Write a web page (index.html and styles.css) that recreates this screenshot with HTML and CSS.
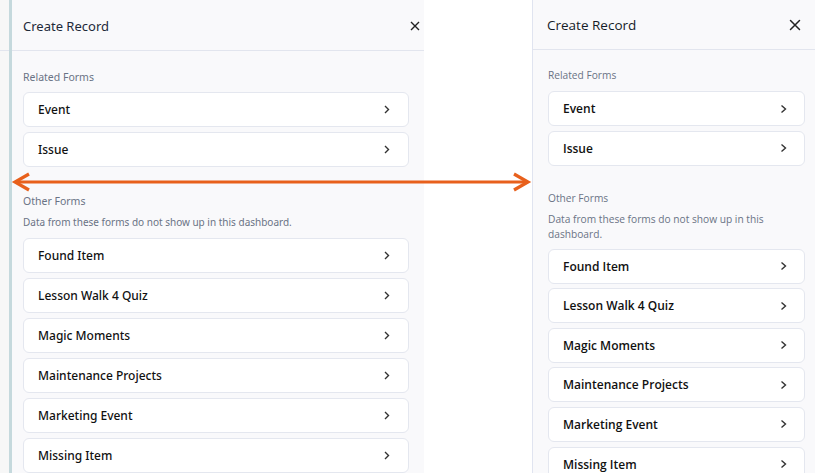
FILE: index.html
```html
<!DOCTYPE html>
<html lang="en">

<head>
    <meta charset="UTF-8">
    <meta name="viewport" content="width=device-width, initial-scale=1.0">
    <title>Create Record - before and after</title>
    <link rel="stylesheet" href="styles.css">
</head>

<body>
    <div class="compare">
        <div class="stub"><div class="stub-head"></div></div>

        <!-- Old panel -->
        <div class="panel panel-old">
            <div class="panel-header">
                <span class="panel-title">Create Record</span>
                <span class="close">
                    <svg width="10" height="10" viewBox="0 0 10 10"><path d="M1 1l8 8M9 1l-8 8" stroke="#222" stroke-width="1.4" fill="none"/></svg>
                </span>
            </div>
            <div class="panel-body">
                <div class="section-label">Related Forms</div>
                <div class="form-list">
                    <div class="form-item"><span>Event</span><svg class="chev" width="6" height="9" viewBox="0 0 6 9"><path d="M1 1l3.5 3.5L1 8" /></svg></div>
                    <div class="form-item"><span>Issue</span><svg class="chev" width="6" height="9" viewBox="0 0 6 9"><path d="M1 1l3.5 3.5L1 8" /></svg></div>
                </div>
                <div class="section-label section-gap">Other Forms</div>
                <div class="section-note">Data from these forms do not show up in this dashboard.</div>
                <div class="form-list">
                    <div class="form-item"><span>Found Item</span><svg class="chev" width="6" height="9" viewBox="0 0 6 9"><path d="M1 1l3.5 3.5L1 8" /></svg></div>
                    <div class="form-item"><span>Lesson Walk 4 Quiz</span><svg class="chev" width="6" height="9" viewBox="0 0 6 9"><path d="M1 1l3.5 3.5L1 8" /></svg></div>
                    <div class="form-item"><span>Magic Moments</span><svg class="chev" width="6" height="9" viewBox="0 0 6 9"><path d="M1 1l3.5 3.5L1 8" /></svg></div>
                    <div class="form-item"><span>Maintenance Projects</span><svg class="chev" width="6" height="9" viewBox="0 0 6 9"><path d="M1 1l3.5 3.5L1 8" /></svg></div>
                    <div class="form-item"><span>Marketing Event</span><svg class="chev" width="6" height="9" viewBox="0 0 6 9"><path d="M1 1l3.5 3.5L1 8" /></svg></div>
                    <div class="form-item"><span>Missing Item</span><svg class="chev" width="6" height="9" viewBox="0 0 6 9"><path d="M1 1l3.5 3.5L1 8" /></svg></div>
                </div>
            </div>
        </div>

        <div class="spacer"></div>

        <!-- New panel -->
        <div class="panel panel-new">
            <div class="panel-header">
                <span class="panel-title">Create Record</span>
                <span class="close">
                    <svg width="12" height="12" viewBox="0 0 12 12"><path d="M1.5 1.5l9 9M10.5 1.5l-9 9" stroke="#222" stroke-width="1.5" fill="none" stroke-linecap="round"/></svg>
                </span>
            </div>
            <div class="panel-body">
                <div class="section-label">Related Forms</div>
                <div class="form-list">
                    <div class="form-item"><span>Event</span><svg class="chev" width="7" height="10" viewBox="0 0 7 10"><path d="M1.5 1.5l4 3.5-4 3.5" /></svg></div>
                    <div class="form-item"><span>Issue</span><svg class="chev" width="7" height="10" viewBox="0 0 7 10"><path d="M1.5 1.5l4 3.5-4 3.5" /></svg></div>
                </div>
                <div class="section-label section-gap">Other Forms</div>
                <div class="section-note">Data from these forms do not show up in this dashboard.</div>
                <div class="form-list">
                    <div class="form-item"><span>Found Item</span><svg class="chev" width="7" height="10" viewBox="0 0 7 10"><path d="M1.5 1.5l4 3.5-4 3.5" /></svg></div>
                    <div class="form-item"><span>Lesson Walk 4 Quiz</span><svg class="chev" width="7" height="10" viewBox="0 0 7 10"><path d="M1.5 1.5l4 3.5-4 3.5" /></svg></div>
                    <div class="form-item"><span>Magic Moments</span><svg class="chev" width="7" height="10" viewBox="0 0 7 10"><path d="M1.5 1.5l4 3.5-4 3.5" /></svg></div>
                    <div class="form-item"><span>Maintenance Projects</span><svg class="chev" width="7" height="10" viewBox="0 0 7 10"><path d="M1.5 1.5l4 3.5-4 3.5" /></svg></div>
                    <div class="form-item"><span>Marketing Event</span><svg class="chev" width="7" height="10" viewBox="0 0 7 10"><path d="M1.5 1.5l4 3.5-4 3.5" /></svg></div>
                    <div class="form-item"><span>Missing Item</span><svg class="chev" width="7" height="10" viewBox="0 0 7 10"><path d="M1.5 1.5l4 3.5-4 3.5" /></svg></div>
                </div>
            </div>
        </div>

        <!-- arrow drawn over both panels -->
        <svg class="width-arrow" width="534" height="26" viewBox="0 0 534 26">
            <path d="M15 13H528" stroke="#e8601c" stroke-width="3" fill="none"/>
            <path d="M29 5L15 13L29 21" stroke="#e8601c" stroke-width="3.2" fill="none"/>
            <path d="M514 5L528 13L514 21" stroke="#e8601c" stroke-width="3.2" fill="none"/>
        </svg>
    </div>
</body>

</html>
```

FILE: styles.css
```css
body {
    margin: 0;
    padding: 0;
    background-color: #fff;
    font-family: "Open Sans", Arial, sans-serif;
    color: #111;
}

.compare {
    position: relative;
    display: flex;
    height: 473px;
    overflow: hidden;
}

.stub {
    width: 9px;
    background-color: #f7f7f7;
}

.stub-head {
    height: 50px;
    border-bottom: 1px solid #e2e5ee;
}

.panel {
    background-color: #f9f9fb;
}

/* old version */
.panel-old {
    width: 412px;
    border-left: 3px solid #c5d9dd;
    font-family: "Noto Sans", Tahoma, sans-serif;
}

.spacer {
    width: 108px;
}

/* new version */
.panel-new {
    flex: 1;
    border-left: 1px solid #e0e4f0;
}

.panel-header {
    display: flex;
    align-items: center;
    justify-content: space-between;
    height: 50px;
    border-bottom: 1px solid #e2e5ee;
}

.panel-old .panel-header {
    padding: 2px 4px 0 11px;
    height: 48px;
}

.panel-new .panel-header {
    height: 49px;
    padding: 0 14px 0 14px;
}

.panel-title {
    font-size: 13px;
    color: #1e2a3a;
}

.panel-new .panel-title {
    font-size: 13.5px;
    color: #151c28;
}

.close {
    display: flex;
}

.panel-body {
    padding: 19px 15px 0 11px;
}

.panel-new .panel-body {
    padding: 18px 10px 0 15px;
}

.section-label {
    font-size: 10.5px;
    line-height: 14px;
    color: #6a7385;
    margin-bottom: 8px;
}

.panel-new .section-label {
    font-size: 10.2px;
    margin-bottom: 9px;
}

.section-gap {
    margin-top: 27px;
}

.panel-new .section-gap {
    margin-top: 25px;
    margin-bottom: 7px;
}

.panel-old .section-gap {
    margin-bottom: 7px;
}

.section-note {
    font-size: 10px;
    line-height: 14px;
    color: #6a7385;
    margin-bottom: 9px;
}

.panel-new .section-note {
    font-size: 10.2px;
    line-height: 15px;
    margin-bottom: 7px;
}

.form-list {
    display: flex;
    flex-direction: column;
    gap: 5px;
}

.panel-new .form-list {
    gap: 4.6px;
}

.form-item {
    display: flex;
    align-items: center;
    justify-content: space-between;
    height: 33px;
    padding: 0 18px 0 14px;
    background-color: #fff;
    border: 1px solid #e4e7ef;
    border-radius: 6px;
    font-size: 12px;
    font-weight: 500;
}

.panel-new .form-item {
    padding: 0 17px 0 14px;
    font-size: 12px;
    font-weight: 600;
}

.chev {
    fill: none;
    stroke: #333;
    stroke-width: 1.4;
}

.width-arrow {
    position: absolute;
    left: 0;
    top: 169px;
}
```
